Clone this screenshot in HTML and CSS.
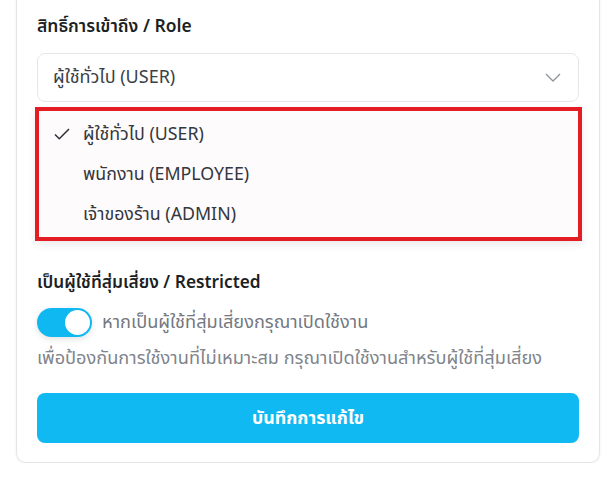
FILE: index.html
```html
<!DOCTYPE html>
<html lang="th">
<head>
<meta charset="utf-8">
<title>Role</title>
<link rel="stylesheet" href="styles.css">
</head>
<body>
<div class="page">
  <div class="card">
    <div class="field">
      <div class="label">สิทธิ์การเข้าถึง / Role</div>
      <div class="select">
        <span class="select-value">ผู้ใช้ทั่วไป (USER)</span>
        <svg class="chevron" width="16" height="9" viewBox="0 0 16 9" fill="none"><path d="M1 1l7 7 7-7" stroke="#8e949c" stroke-width="1.3"/></svg>
      </div>
      <ul class="menu">
        <li class="option selected">
          <svg class="check" width="16" height="12" viewBox="0 0 16 12" fill="none"><path d="M1 6.5l4.3 4.3L15 1" stroke="#2b2f36" stroke-width="1.5"/></svg>
          <span>ผู้ใช้ทั่วไป (USER)</span>
        </li>
        <li class="option"><span>พนักงาน (EMPLOYEE)</span></li>
        <li class="option"><span>เจ้าของร้าน (ADMIN)</span></li>
      </ul>
    </div>
    <div class="field restricted">
      <div class="label label-restricted">เป็นผู้ใช้ที่สุ่มเสี่ยง / Restricted</div>
      <label class="toggle-row">
        <span class="toggle"><span class="knob"></span></span>
        <span class="toggle-text">หากเป็นผู้ใช้ที่สุ่มเสี่ยงกรุณาเปิดใช้งาน</span>
      </label>
      <p class="hint">เพื่อป้องกันการใช้งานที่ไม่เหมาะสม กรุณาเปิดใช้งานสำหรับผู้ใช้ที่สุ่มเสี่ยง</p>
    </div>
    <button class="save" type="button">บันทึกการแก้ไข</button>
  </div>
</div>
</body>
</html>
```
FILE: styles.css
```css
* { box-sizing: border-box; }
html, body { margin: 0; padding: 0; background: #ffffff; }
body {
  font-family: "Noto Sans Thai", "Noto Sans", "DejaVu Sans", sans-serif;
  color: #1f2328;
  overflow: hidden;
}
.page { padding: 0 15px 0 16px; }
.card {
  margin-top: -24px;
  border: 1px solid #e3e5e8;
  border-radius: 10px;
  box-shadow: 0 1px 3px rgba(0,0,0,0.06);
  padding: 38px 20px 19px 20px;
  background: #fff;
}
.label {
  font-size: 17.5px;
  line-height: 24px;
  font-weight: 600;
  color: #1c1f24;
}
.label-restricted { font-size: 17.3px; }
.select {
  margin-top: 14px;
  height: 49px;
  border: 1px solid #e5e7eb;
  border-radius: 8px;
  display: flex;
  align-items: center;
  justify-content: space-between;
  padding: 0 17px 0 15px;
  font-size: 18px;
  color: #3a3f47;
}
.chevron { display: block; }
.menu {
  list-style: none;
  margin: 5px -3px 0 -2px;
  padding: 3px 0;
  border: 4px solid #e41d24;
  background: #fefbfc;
  box-shadow: 0 4px 8px rgba(0,0,0,0.08);
}
.option {
  height: 40px;
  display: flex;
  align-items: center;
  padding-left: 44px;
  font-size: 17.8px;
  color: #33373e;
  position: relative;
}
.check {
  position: absolute;
  left: 15px;
  top: 14px;
}
.restricted { margin-top: 30px; }
.toggle-row {
  margin-top: 13px;
  display: flex;
  align-items: center;
  gap: 10px;
}
.toggle {
  width: 55px;
  height: 29px;
  border-radius: 15px;
  background: #10b8f1;
  display: flex;
  align-items: center;
  justify-content: flex-end;
  padding: 2px;
  box-shadow: 0 2px 6px rgba(0,0,0,0.12);
}
.knob {
  width: 25px;
  height: 25px;
  border-radius: 50%;
  background: #fff;
}
.toggle-text {
  font-size: 18.2px;
  line-height: 24px;
  color: #74787f;
}
.hint {
  margin: 10px 0 0 0;
  font-size: 18.2px;
  line-height: 24px;
  color: #80848b;
  white-space: nowrap;
}
.save {
  margin-top: 22px;
  width: 100%;
  height: 50px;
  border: none;
  border-radius: 8px;
  background: #10b9f2;
  color: #fff;
  font-family: inherit;
  font-size: 17.8px;
  font-weight: 700;
}
```
